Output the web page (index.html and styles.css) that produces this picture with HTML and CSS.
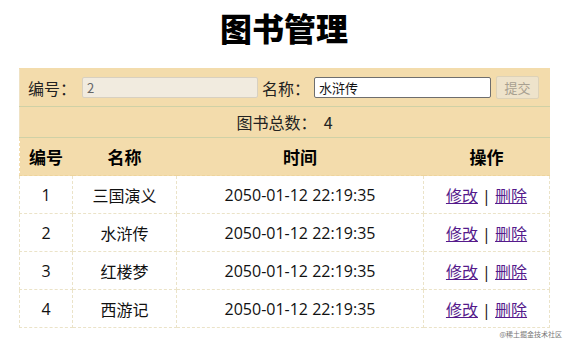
FILE: index.html
```html
<!DOCTYPE html>
<html lang="zh-CN">
<head>
<meta charset="utf-8">
<title>图书管理</title>
<link rel="stylesheet" href="styles.css">
</head>
<body>
<div class="page">
  <h1 class="title">图书管理</h1>
  <table class="books">
    <colgroup>
      <col class="c1">
      <col class="c2">
      <col class="c3">
      <col class="c4">
    </colgroup>
    <thead>
      <tr class="toolbar">
        <td colspan="4">
          <div class="form">
            <label class="lbl">编号：</label>
            <input class="inp inp-id" type="text" value="2" disabled>
            <label class="lbl lbl-name">名称：</label>
            <input class="inp inp-name" type="text" value="水浒传">
            <button class="btn" disabled>提交</button>
          </div>
        </td>
      </tr>
      <tr class="count">
        <td colspan="4">图书总数：&nbsp;&nbsp;4</td>
      </tr>
      <tr class="head">
        <th>编号</th>
        <th>名称</th>
        <th>时间</th>
        <th>操作</th>
      </tr>
    </thead>
    <tbody>
      <tr><td>1</td><td>三国演义</td><td>2050-01-12 22:19:35</td><td><a href="#">修改</a> | <a href="#">删除</a></td></tr>
      <tr><td>2</td><td>水浒传</td><td>2050-01-12 22:19:35</td><td><a href="#">修改</a> | <a href="#">删除</a></td></tr>
      <tr><td>3</td><td>红楼梦</td><td>2050-01-12 22:19:35</td><td><a href="#">修改</a> | <a href="#">删除</a></td></tr>
      <tr><td>4</td><td>西游记</td><td>2050-01-12 22:19:35</td><td><a href="#">修改</a> | <a href="#">删除</a></td></tr>
    </tbody>
  </table>
  <div class="mark">@稀土掘金技术社区</div>
</div>
</body>
</html>
```

FILE: styles.css
```css
html, body {
  margin: 0;
  padding: 0;
  background: #ffffff;
}
body {
  font-family: "Noto Sans CJK SC", "Noto Sans", sans-serif;
  font-size: 16px;
  color: #111;
}
.page {
  width: 568px;
  padding-top: 4px;
  position: relative;
  height: 353px;
}
.title {
  margin: 0;
  height: 64px;
  line-height: 46px;
  font-size: 32px;
  font-weight: 900;
  text-align: center;
  color: #000;
}
.books {
  margin: 0 0 0 19px;
  width: 530px;
  border-collapse: collapse;
  table-layout: fixed;
}
.c1 { width: 53px; }
.c2 { width: 104px; }
.c3 { width: 247px; }
.c4 { width: 126px; }
.books td, .books th {
  border: 1px dashed #ebe3c8;
  text-align: center;
  padding: 0;
  white-space: nowrap;
}
.books thead {
  background: #f3dcac;
}
.toolbar td {
  height: 37px;
  border: 1px solid #f3dcac;
  border-left: 1px solid #efe2c4;
  border-bottom: 1px solid #cfd1a6;
  text-align: left;
}
.form {
  display: flex;
  align-items: center;
  padding-left: 8px;
  color: #222;
}
.lbl {
  font-size: 16px;
  line-height: 20px;
}
.lbl-name {
  margin-left: 4px;
}
.inp {
  box-sizing: border-box;
  height: 21px;
  font-family: "Noto Sans CJK SC", sans-serif;
  font-size: 13px;
  padding: 0 4px;
  margin: 0 0 0 6px;
  outline: none;
}
.inp-id {
  width: 176px;
  background: #f1ebdf;
  border: 1px solid #d8d0c0;
  color: #666;
  border-radius: 2px;
}
.inp-name {
  width: 177px;
  margin-left: 4px;
  background: #ffffff;
  border: 1px solid #6e6e6e;
  border-radius: 2px;
  color: #111;
}
.btn {
  box-sizing: border-box;
  margin-left: 5px;
  width: 43px;
  height: 23px;
  padding: 0;
  font-family: "Noto Sans CJK SC", sans-serif;
  font-size: 13px;
  color: #a8a090;
  background: #eee3cb;
  border: 1px solid #ddd2b8;
  border-radius: 2px;
}
.count td {
  height: 30px;
  border-left: 1px solid #efe2c4;
  border-right: 1px solid #f3dcac;
  border-bottom: 1px solid #cfd1a6;
  color: #222;
}
.head th {
  height: 37px;
  font-weight: 700;
  font-size: 17px;
  color: #000;
  border-top: 1px solid #cfd1a6;
  border-bottom: 1px dashed #eed49c;
  border-left: 1px dashed #f3dcac;
  border-right: 1px dashed #f3dcac;
}
.books tbody td {
  height: 37px;
  font-size: 16px;
  color: #111;
  font-family: "Open Sans", "Noto Sans CJK SC", sans-serif;
}
.books a {
  color: #551a8b;
  text-decoration: underline;
}
.mark {
  position: absolute;
  right: 6px;
  bottom: 18px;
  font-size: 7px;
  color: #777;
}
```
